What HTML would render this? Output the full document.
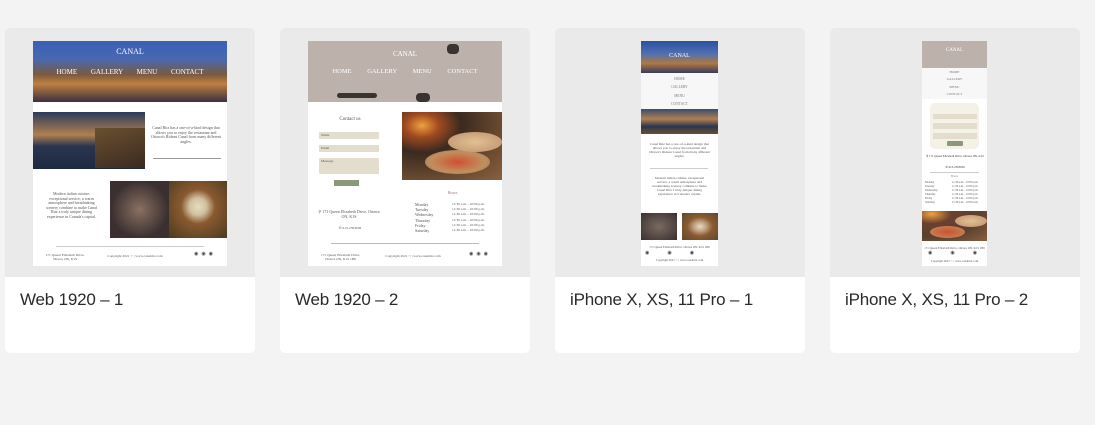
<!DOCTYPE html>
<html><head><meta charset="utf-8"><style>
*{margin:0;padding:0;box-sizing:border-box}
body{width:1095px;height:425px;background:#f3f3f3;position:relative;overflow:hidden;font-family:"Liberation Sans",sans-serif}
.card{position:absolute;top:28px;width:250px;height:325px;background:#fff;border-radius:5px;overflow:hidden}
.card .top{position:absolute;left:0;top:0;width:250px;height:249px;background:#eaeaea}
.card .lbl{position:absolute;left:15px;top:262px;font-size:17px;color:#2a2a2a;letter-spacing:-0.2px}
.a{position:absolute}
.t{position:absolute;font-family:"Liberation Serif",serif;color:#555;text-align:center;line-height:1.15}
.wht{background:#fff}
</style></head><body>

<!-- Card 1 -->
<div class="card" style="left:5px"><div class="top"></div><div class="lbl">Web 1920 – 1</div></div>
<div class="a wht" style="left:33px;top:41px;width:194px;height:225px"></div>
<div class="a" style="left:33px;top:41px;width:194px;height:61px;background:linear-gradient(180deg,#3a5fb8 0%,#4a68b0 30%,#7a5a40 55%,#c08040 70%,#3a3040 100%)"></div>
<div class="t" style="left:33px;top:47px;width:194px;font-size:8px;color:#fff">CANAL</div>
<div class="t" style="left:33px;top:68px;width:194px;font-size:7px;color:#fff;word-spacing:12px">HOME GALLERY MENU CONTACT</div>
<div class="a" style="left:33px;top:112px;width:112px;height:57px;background:linear-gradient(180deg,#2a3a5a 0%,#b08050 40%,#2a3550 60%,#1d2a40 100%)"></div>
<div class="a" style="left:95px;top:128px;width:50px;height:40px;background:linear-gradient(160deg,#6a5030,#3a2a20)"></div>
<div class="t" style="left:150px;top:126px;width:72px;font-size:4px">Canal Ritz has a one-of-a-kind design that allows you to enjoy the restaurant and Ottawa's Rideau Canal from many different angles.</div>
<div class="a" style="left:153px;top:158px;width:68px;height:1px;background:#999"></div>
<div class="t" style="left:44px;top:192px;width:55px;font-size:4px">Modern italian cuisine, exceptional service, a warm atmosphere and breathtaking scenery combine to make Canal Ritz a truly unique dining experience in Canada's capital.</div>
<div class="a" style="left:110px;top:181px;width:59px;height:57px;background:radial-gradient(circle at 50% 50%,#8a7060,#3a3030 70%)"></div>
<div class="a" style="left:169px;top:181px;width:58px;height:57px;background:radial-gradient(circle at 50% 45%,#e8dcc0 0,#d0c0a0 20%,#8a5a30 40%,#4a3a20 100%)"></div>
<div class="a" style="left:56px;top:246px;width:148px;height:1px;background:#ccc"></div>
<div class="t" style="left:44px;top:253px;width:42px;font-size:3.5px">171 Queen Elizabeth Drive, Ottawa ON, K1S</div>
<div class="t" style="left:100px;top:254px;width:70px;font-size:3.5px">Copyright 2021 © | www.canalritz.com</div>
<div class="t" style="left:190px;top:252px;width:30px;font-size:5px;color:#444;letter-spacing:3px">◉◉◉</div>

<!-- Card 2 -->
<div class="card" style="left:280px"><div class="top"></div><div class="lbl">Web 1920 – 2</div></div>
<div class="a wht" style="left:308px;top:41px;width:194px;height:225px"></div>
<div class="a" style="left:308px;top:41px;width:194px;height:61px;background:#bcb1ab"></div>
<div class="a" style="left:337px;top:93px;width:40px;height:5px;border-radius:3px;background:#3a3430"></div>
<div class="a" style="left:447px;top:44px;width:12px;height:10px;border-radius:4px;background:#3a3430"></div>
<div class="a" style="left:416px;top:93px;width:14px;height:9px;border-radius:4px;background:#3a3430"></div>
<div class="t" style="left:308px;top:50px;width:194px;font-size:7px;color:#fff">CANAL</div>
<div class="t" style="left:308px;top:68px;width:194px;font-size:6.5px;color:#fff;word-spacing:14px">HOME GALLERY MENU CONTACT</div>
<div class="t" style="left:320px;top:117px;width:60px;font-size:5px">Contact us</div>
<div class="a" style="left:319px;top:132px;width:60px;height:7px;background:#e3ddcd;border-radius:1px"></div>
<div class="a" style="left:319px;top:145px;width:60px;height:7px;background:#e3ddcd;border-radius:1px"></div>
<div class="a" style="left:319px;top:158px;width:60px;height:16px;background:#e3ddcd;border-radius:1px"></div>
<div class="t" style="left:321px;top:133px;font-size:3.5px;text-align:left">Name</div>
<div class="t" style="left:321px;top:146px;font-size:3.5px;text-align:left">Email</div>
<div class="t" style="left:321px;top:159px;font-size:3.5px;text-align:left">Message</div>
<div class="a" style="left:334px;top:180px;width:25px;height:6px;background:#8a9a78"></div>
<div class="a" style="left:402px;top:112px;width:100px;height:68px;background:radial-gradient(ellipse at 20% 20%,#f0a040 0,#a04a20 15%,#3a2a20 35%,#6a4a30 70%,#8a6040 100%)"></div>
<div class="a" style="left:425px;top:150px;width:65px;height:24px;border-radius:50%;background:radial-gradient(#d05030,#c09060 60%,#8a7050)"></div>
<div class="a" style="left:448px;top:132px;width:54px;height:20px;border-radius:50%;background:radial-gradient(#e0c090,#c09070)"></div>
<div class="t" style="left:430px;top:191px;width:45px;font-size:4px;color:#a07a80">Hours</div>
<div class="t" style="left:415px;top:202px;width:30px;font-size:4px;text-align:left;line-height:5.2px">Monday<br>Tuesday<br>Wednesday<br>Thursday<br>Friday<br>Saturday</div>
<div class="t" style="left:452px;top:202px;width:42px;font-size:3.5px;text-align:left;line-height:5.2px">11:30 a.m. - 10:00 p.m.<br>11:30 a.m. - 10:00 p.m.<br>11:30 a.m. - 10:00 p.m.<br>11:30 a.m. - 10:00 p.m.<br>11:30 a.m. - 10:00 p.m.<br>11:30 a.m. - 10:00 p.m.</div>
<div class="t" style="left:318px;top:210px;width:62px;font-size:4px">⚲ 171 Queen Elizabeth Drive, Ottawa ON, K1S</div>
<div class="t" style="left:330px;top:226px;width:40px;font-size:3.5px">✆ 613-2363636</div>
<div class="a" style="left:331px;top:243px;width:148px;height:1px;background:#bbb"></div>
<div class="t" style="left:318px;top:253px;width:45px;font-size:3.5px">171 Queen Elizabeth Drive, Ottawa ON, K1S 1B6</div>
<div class="t" style="left:378px;top:254px;width:70px;font-size:3.5px">Copyright 2021 © | www.canalritz.com</div>
<div class="t" style="left:465px;top:252px;width:30px;font-size:5px;color:#444;letter-spacing:3px">◉◉◉</div>

<!-- Card 3 -->
<div class="card" style="left:555px"><div class="top"></div><div class="lbl">iPhone X, XS, 11 Pro – 1</div></div>
<div class="a wht" style="left:641px;top:41px;width:77px;height:225px"></div>
<div class="a" style="left:641px;top:41px;width:77px;height:32px;background:linear-gradient(180deg,#2a50a0,#5070b0 40%,#b07840 70%,#3a3a60)"></div>
<div class="t" style="left:641px;top:53px;width:77px;font-size:6px;color:#fff">CANAL</div>
<div class="a" style="left:641px;top:73px;width:77px;height:36px;background:#f7f7f7"></div>
<div class="t" style="left:641px;top:75px;width:77px;font-size:3.6px;color:#777;line-height:8.3px">HOME<br>GALLERY<br>MENU<br>CONTACT</div>
<div class="a" style="left:641px;top:109px;width:77px;height:25px;background:linear-gradient(180deg,#3a4a70,#b08050 40%,#2a3550 70%,#6a5030)"></div>
<div class="t" style="left:647px;top:142px;width:65px;font-size:3.5px">Canal Ritz has a one-of-a-kind design that allows you to enjoy the restaurant and Ottawa's Rideau Canal from many different angles.</div>
<div class="a" style="left:650px;top:168px;width:58px;height:1px;background:#ccc"></div>
<div class="t" style="left:650px;top:176px;width:59px;font-size:3.5px">Modern italian cuisine, exceptional service, a warm atmosphere and breathtaking scenery combine to make Canal Ritz a truly unique dining experience in Canada's capital.</div>
<div class="a" style="left:641px;top:213px;width:36px;height:27px;background:radial-gradient(#7a6a60,#3a3030)"></div>
<div class="a" style="left:682px;top:213px;width:36px;height:27px;background:radial-gradient(#e8dcc0 0,#c0a080 25%,#8a5a30 50%,#5a4a30)"></div>
<div class="t" style="left:641px;top:246px;width:77px;font-size:3px">171 Queen Elizabeth Drive, Ottawa ON, K1S 1B6</div>
<div class="t" style="left:645px;top:251px;width:70px;font-size:5px;color:#444;letter-spacing:18px;text-align:left">◉◉◉</div>
<div class="t" style="left:641px;top:259px;width:77px;font-size:3px">Copyright 2021 © | www.canalritz.com</div>

<!-- Card 4 -->
<div class="card" style="left:830px"><div class="top"></div><div class="lbl">iPhone X, XS, 11 Pro – 2</div></div>
<div class="a wht" style="left:922px;top:41px;width:65px;height:225px"></div>
<div class="a" style="left:922px;top:41px;width:65px;height:27px;background:#bcb1ab"></div>
<div class="t" style="left:922px;top:48px;width:65px;font-size:5px;color:#fff">CANAL</div>
<div class="a" style="left:922px;top:68px;width:65px;height:31px;background:#f7f7f7"></div>
<div class="t" style="left:922px;top:69px;width:65px;font-size:3.4px;color:#777;line-height:7.3px">HOME<br>GALLERY<br>MENU<br>CONTACT</div>
<div class="a" style="left:930px;top:103px;width:49px;height:46px;background:#f4f1e6;border-radius:5px"></div>
<div class="a" style="left:933px;top:114px;width:44px;height:5px;background:#e3ddcd"></div>
<div class="a" style="left:933px;top:123px;width:44px;height:6px;background:#e3ddcd"></div>
<div class="a" style="left:933px;top:133px;width:44px;height:6px;background:#e3ddcd"></div>
<div class="a" style="left:947px;top:141px;width:16px;height:5px;background:#8a9a78;border-radius:1px"></div>
<div class="t" style="left:926px;top:155px;width:58px;font-size:3px;color:#333">⚲ 171 Queen Elizabeth Drive, Ottawa ON, K1S</div>
<div class="t" style="left:926px;top:166px;width:58px;font-size:3px;color:#333">✆ 613-2363636</div>
<div class="a" style="left:930px;top:172px;width:49px;height:1px;background:#ccc"></div>
<div class="t" style="left:922px;top:175px;width:65px;font-size:3px;color:#a07a80">Hours</div>
<div class="t" style="left:925px;top:181px;width:25px;font-size:2.8px;text-align:left;line-height:4.1px">Monday<br>Tuesday<br>Wednesday<br>Thursday<br>Friday<br>Saturday</div>
<div class="t" style="left:952px;top:181px;width:34px;font-size:2.8px;text-align:left;line-height:4.1px">11:30 a.m. - 10:00 p.m.<br>11:30 a.m. - 10:00 p.m.<br>11:30 a.m. - 10:00 p.m.<br>11:30 a.m. - 10:00 p.m.<br>11:30 a.m. - 10:00 p.m.<br>11:30 a.m. - 10:00 p.m.</div>
<div class="a" style="left:922px;top:211px;width:65px;height:30px;background:radial-gradient(ellipse at 15% 10%,#f0a040 0,#6a4030 25%,#5a4030 60%,#8a6040)"></div>
<div class="a" style="left:930px;top:226px;width:35px;height:12px;border-radius:50%;background:radial-gradient(#d05030,#c09060)"></div>
<div class="a" style="left:955px;top:215px;width:32px;height:12px;border-radius:50%;background:radial-gradient(#e0c090,#c09070)"></div>
<div class="t" style="left:922px;top:247px;width:65px;font-size:3px">171 Queen Elizabeth Drive, Ottawa ON, K1S 1B6</div>
<div class="t" style="left:928px;top:251px;width:60px;font-size:5px;color:#444;letter-spacing:18px;text-align:left">◉◉◉</div>
<div class="t" style="left:922px;top:260px;width:65px;font-size:3px">Copyright 2021 © | www.canalritz.com</div>

</body></html>
